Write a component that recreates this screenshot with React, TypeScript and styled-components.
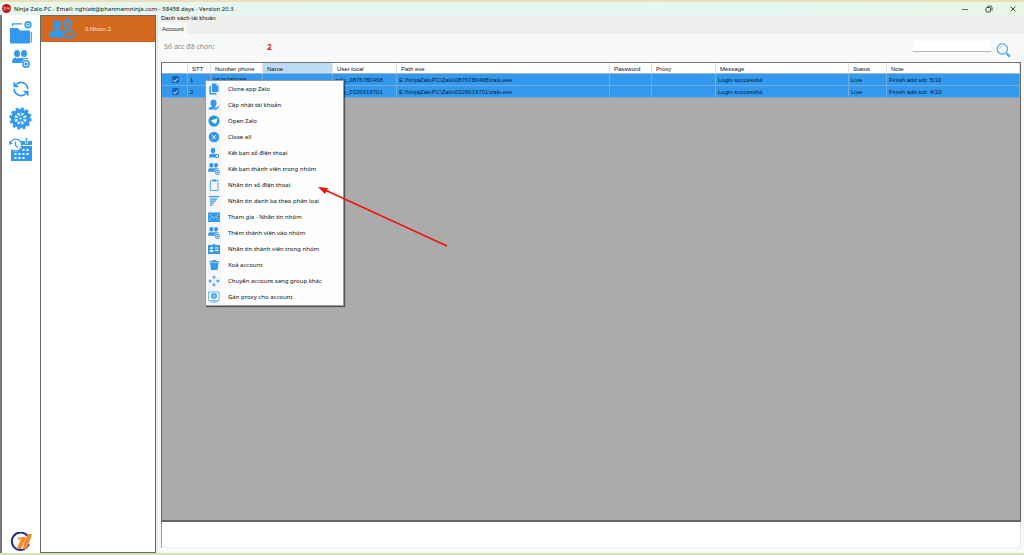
import React from 'react';
import styled, { createGlobalStyle } from 'styled-components';

const BLUE = '#3399ee';
const UI_FONT = '"Noto Sans", "Open Sans", sans-serif';
const GRID_FONT = '"Liberation Sans", Arial, sans-serif';

const GlobalStyle = createGlobalStyle`
  * { box-sizing: border-box; }
  html, body, #root { height: 100%; }
  body { margin: 0; font-family: ${UI_FONT}; font-size: 6px; color: #111; overflow: hidden; }
  button, input { font: inherit; color: inherit; }
  button { border: 0; padding: 0; background: none; display: flex; align-items: center; }
  svg { display: block; flex: none; }
`;

const Window = styled.div`
  position: relative;
  display: flex;
  flex-direction: column;
  height: 100vh;
  background: #f0f0f0;
  border-top: 2px solid #ecdfb8;
  border-bottom: 2px solid #d3e3b4;
`;

const TitleBar = styled.header`
  display: flex;
  align-items: center;
  justify-content: space-between;
  height: 13px;
  flex: none;
  padding: 0 7px 0 2px;
  background: linear-gradient(90deg, #e6f6ee, #e2f9f1 75%, #e9f7e2);
`;

const TitleText = styled.h1`
  display: flex;
  align-items: center;
  gap: 3px;
  margin: 0;
  font-size: 6px;
  font-weight: 400;
  white-space: nowrap;
`;

const WindowButtons = styled.div`
  display: flex;
  gap: 16px;
`;

const Body = styled.div`
  display: flex;
  flex: 1;
  min-height: 0;
  border-left: 2px solid #777;
`;

const Sidebar = styled.nav`
  display: flex;
  flex-direction: column;
  align-items: center;
  width: 38px;
  flex: none;
  padding: 4px 1px 1px 0;
  background: #fff;
`;

const ToolButton = styled.button<{ $height: number }>`
  justify-content: center;
  width: 28px;
  height: ${(p) => p.$height}px;
`;

const BrandLink = styled.a`
  margin-top: auto;
`;

const GroupPanel = styled.aside`
  width: 116px;
  flex: none;
  background: #fff;
  border: 1px solid #6a6a6a;
`;

const GroupButton = styled.button`
  width: 100%;
  height: 26px;
  padding-left: 8px;
  gap: 10px;
  background: #d2691e;
  color: #f7e6d8;
  font-family: ${GRID_FONT};
`;

const Main = styled.main`
  display: flex;
  flex-direction: column;
  flex: 1;
  min-width: 0;
  margin-left: 1px;
  padding: 0 3px 5px 3px;
  border-left: 1px solid #e2e2e2;
  background: #f8f9f9;
`;

const TabStrip = styled.div`
  flex: none;
  margin: 0 -3px;
  padding-left: 3px;
  height: 19px;
  background: #efefef;
  font-family: ${GRID_FONT};
`;

const Caption = styled.h2`
  margin: 0;
  height: 8px;
  line-height: 7px;
  font-size: 6px;
  font-weight: 400;
`;

const Tab = styled.button`
  height: 11px;
  width: 26px;
  padding-left: 1px;
  background: #f8f9f9;
`;

const FilterBar = styled.div`
  display: flex;
  align-items: center;
  flex: none;
  height: 28px;
  padding: 0 10px 4px 3px;
`;

const CountLabel = styled.span`
  width: 103px;
  font-size: 7px;
  color: #888;
`;

const CountValue = styled.strong`
  font-size: 8px;
  color: #f01818;
`;

const SearchInput = styled.input`
  width: 78px;
  height: 11px;
  margin: 0 5px 0 auto;
  padding: 0 2px;
  border: 0;
  border-bottom: 1px solid #b4b4b4;
  background: #fff;
  outline: 0;
`;

const SearchButton = styled.button`
  align-self: flex-end;
`;

const GridArea = styled.section`
  flex: 1;
  min-height: 0;
  background: #ababab;
  border: 1px solid #666;
  border-top-color: #777;
  border-bottom-width: 2px;
`;

const Grid = styled.table`
  width: 100%;
  table-layout: fixed;
  border-collapse: separate;
  border-spacing: 0;
  font-family: ${GRID_FONT};
  font-size: 6px;
  line-height: 8px;
  white-space: nowrap;
`;

const HeadCell = styled.th<{ $active?: boolean }>`
  height: 11px;
  padding: 1px 0 0 4px;
  text-align: left;
  font-weight: 400;
  background: ${(p) => (p.$active ? '#bcdcf4' : '#fff')};
  border-right: 1px solid #e2e2e2;
  border-bottom: 1px solid #9fb4c6;
`;

const Cell = styled.td`
  height: 12px;
  padding: 0 0 0 2px;
  overflow: hidden;
  background: ${BLUE};
  color: #06203c;
  border-right: 1px solid #74a9d8;
  border-bottom: 1px solid #74a9d8;
`;

const RowCheck = styled.input`
  appearance: none;
  display: grid;
  place-content: center;
  width: 7px;
  height: 7px;
  margin: 0 auto;
  border-radius: 2px;
  background: #0f62ae;
  &:checked::after {
    content: '';
    width: 4px;
    height: 2px;
    border: solid #a5cbea;
    border-width: 0 0 1px 1px;
    transform: rotate(-45deg);
  }
`;

const LogPane = styled.section`
  flex: none;
  height: 26px;
  background: #fff;
  border-left: 1px solid #999;
  border-right: 1px solid #e8e8e8;
  border-bottom: 1px solid #eee;
`;

const Menu = styled.div`
  position: absolute;
  left: 205px;
  top: 78px;
  width: 139px;
  background: linear-gradient(90deg, #f3f5f7 15px, #fdfdfd 15px);
  border: 1px solid #999;
  box-shadow: 1px 1px 1px rgba(0, 0, 0, 0.5);
`;

const MenuButton = styled.button`
  width: 100%;
  height: 16px;
  padding-left: 2px;
  gap: 8px;
  white-space: nowrap;
`;

const Pointer = styled.svg`
  position: absolute;
  left: 317px;
  top: 182px;
  pointer-events: none;
`;

const Icon = ({ w = 12, h = w, box = 24, children }: { w?: number; h?: number; box?: number; children: React.ReactNode }) => (
  <svg width={w} height={h} viewBox={`0 0 ${box} ${(box * h) / w}`} fill={BLUE} stroke="none" aria-hidden="true">
    {children}
  </svg>
);

const AppLogo = () => (
  <svg width="9" height="9" viewBox="0 0 18 18" aria-hidden="true">
    <circle cx="9" cy="9" r="9" fill="#c4161c" />
    <path d="M3 7h4l-4 4h4M8.500 11l1.500-4 1.500 4M13 6.500v4.500M15.500 8v3" fill="none" stroke="#f6c9c9" strokeWidth="1.300" />
  </svg>
);

const FolderIcon = () => (
  <Icon w={22} h={23} box={22}>
    <path d="M0 7h8l2 2.500H20V21.500q0 1-1 1H1q-1 0-1-1z" />
    <path d="M2.500 5.500V2.800h9.500M21.200 11v10.500" fill="none" stroke={BLUE} strokeWidth="1.200" />
    <circle cx="18" cy="3.800" r="2.900" fill="#fff" stroke={BLUE} strokeWidth="1.600" />
    <path d="M18 2.300v3M16.500 3.800h3" stroke={BLUE} strokeWidth="1.100" />
  </Icon>
);

const UsersAddIcon = ({ size = 18 }: { size?: number }) => (
  <Icon w={size} box={18}>
    <ellipse cx="5" cy="3.500" rx="3" ry="3.500" />
    <ellipse cx="12" cy="3.500" rx="3" ry="3.500" />
    <path d="M0 13q0-5 3.500-5.500l1.500 1.300 1.500-1.300q1.200.2 2 .9.800-.7 2-.9L12 8.800l1.500-1.300q2.700.4 3.500 2.300-3.500-1.600-6 .4-1 1.100-1.200 2.800z" />
    <circle cx="14" cy="14" r="3.200" fill="#fff" stroke={BLUE} strokeWidth="1.500" />
    <path d="M14 12.200v3.600M12.200 14h3.600" stroke={BLUE} strokeWidth="1.300" />
  </Icon>
);

const RefreshIcon = () => (
  <Icon w={18} box={18}>
    <path d="M4.500 4.200A6.800 6.800 0 0 1 15.800 9.200M13.500 13.800A6.800 6.800 0 0 1 2.200 8.800" fill="none" stroke={BLUE} strokeWidth="1.700" />
    <path d="M1.500 1.500V7.200h5.700zM16.500 16.500V10.800h-5.700z" />
  </Icon>
);

const GearIcon = () => (
  <Icon w={23} box={23}>
    <circle cx="11.500" cy="11.500" r="7.800" fill="none" stroke={BLUE} strokeWidth="3.600" />
    <circle cx="11.500" cy="11.500" r="10" fill="none" stroke={BLUE} strokeWidth="2.200" strokeDasharray="3 2.236" />
    <path d="M11.500 4v15M4 11.500h15M6.500 6.500l10 10M16.500 6.500l-10 10" stroke={BLUE} strokeWidth="1.600" />
    <circle cx="11.500" cy="11.500" r="2.800" />
    <circle cx="11.500" cy="11.500" r="1.100" fill="#fff" />
  </Icon>
);

const ScheduleIcon = () => (
  <Icon w={23} h={24} box={23}>
    <path d="M2 3h21v20H2z" />
    <path d="M13 7.500h10" stroke="#fff" />
    <path d="M17.500 0v5.500" stroke="#fff" strokeWidth="3" />
    <path d="M17.500 0v5" stroke={BLUE} strokeWidth="1.500" />
    <circle cx="6.500" cy="7" r="6.800" fill="#fff" />
    <path d="M1 5a6 6 0 1 1 1.500 6.500M6.500 3.500V7.500l2.500 2M0 3l1 3 3-1" fill="none" stroke={BLUE} strokeWidth="1.200" />
    <path d="M13.500 11h2v2h-2zM17.500 11h2v2h-2zM5.500 15h2v2h-2zM9.500 15h2v2h-2zM13.500 15h2v2h-2zM17.500 15h2v2h-2zM5.500 19h2v2h-2zM9.500 19h2v2h-2zM13.500 19h2v2h-2z" fill="#fff" />
  </Icon>
);

const BrandIcon = () => (
  <svg width="22" height="20" viewBox="0 0 22 20" aria-hidden="true">
    <path d="M17.500 4A8.700 8.700 0 1 0 18.800 12" fill="none" stroke="#17349a" strokeWidth="2" />
    <path d="M7 5.500h4.500l-.5 2H8zM12 5h4L11 17H6.500zM18 2h4L17 17h-4.500l2-6-2 3z" fill="#f58a2a" />
  </svg>
);

const GroupIcon = () => (
  <Icon w={26} h={20} box={26}>
    <ellipse cx="8" cy="5.800" rx="4" ry="4.600" />
    <path d="M0 18q0-6.500 5-7h6q2.500 0 3.500 1.500l-2 2q-1 3.500 3 4H2q-2 0-2-.5z" />
    <circle cx="18.500" cy="4.500" r="3.300" fill="none" stroke={BLUE} strokeWidth="2.400" />
    <path d="M15 11.500h6.500q3.500.5 3.500 5.500-1 1-9 1-3 0-3-2t5-1.500" fill="none" stroke={BLUE} strokeWidth="1.800" />
  </Icon>
);

const SearchIcon = () => (
  <svg width="15" height="15" viewBox="0 0 15 15" fill="none" aria-hidden="true">
    <circle cx="6.300" cy="6" r="5.200" stroke="#49a6ec" strokeWidth="1.200" />
    <path d="M3.500 6A3 3 0 0 1 6.300 3.200" stroke="#8ac6f3" strokeWidth=".8" />
    <path d="M10.500 10.300l3.500 3.500" stroke="#49a6ec" strokeWidth="2.200" />
  </svg>
);

const line = { fill: 'none', stroke: BLUE };

const menuItems: { label: string; icon: React.ReactNode }[] = [
  {
    label: 'Clone app Zalo',
    icon: <Icon><path d="M8 1h9l4 4v13H8z" /><path d="M3 6h3v14h11v3H3z" /><path d="M17 1v4h4" fill="none" stroke="#fff" /></Icon>,
  },
  {
    label: 'Cập nhật tài khoản',
    icon: <Icon><ellipse cx="11" cy="8" rx="6" ry="7" /><path d="M1 21q0-5 7-5.500v-3h6v3l3 .5-5 5z" /><path d="M14 22l8-7" stroke={BLUE} strokeWidth="2.500" /></Icon>,
  },
  {
    label: 'Open Zalo',
    icon: <Icon><circle cx="12" cy="12" r="11" fill="#1a96dc" /><path d="M4 12l15-6-3 12-4-3-2 2-1-4z" fill="#fff" /></Icon>,
  },
  {
    label: 'Close all',
    icon: <Icon><circle cx="12" cy="12" r="10.500" /><path d="M8 8l8 8M16 8l-8 8" stroke="#fff" strokeWidth="1.800" /></Icon>,
  },
  {
    label: 'Kết bạn số điện thoại',
    icon: <Icon><ellipse cx="10" cy="7" rx="4.500" ry="5.500" /><path d="M2 21q0-7 5-7.500h6q2 0 3 1.500l-3 6z" /><circle cx="18" cy="18" r="3.500" {...line} strokeWidth="2.400" /></Icon>,
  },
  { label: 'Kết bạn thành viên trong nhóm', icon: <UsersAddIcon size={12} /> },
  {
    label: 'Nhắn tin số điện thoại',
    icon: <Icon><path d="M5 3h15v20H5z" {...line} strokeWidth="1.600" /><path d="M9 1h7v4H9z" /></Icon>,
  },
  {
    label: 'Nhắn tin danh bạ theo phân loại',
    icon: <Icon><path d="M2 3h20M4 8h14M4 12h12M4 16h8M4 20h5" {...line} strokeWidth="2.500" /></Icon>,
  },
  {
    label: 'Tham gia - Nhắn tin nhóm',
    icon: <Icon><path d="M0 3h24v19H0z" /><path d="M1 6l11 8 11-8M1 19l7-7M23 19l-7-7" fill="none" stroke="#cfe6fa" strokeWidth="1.200" /></Icon>,
  },
  { label: 'Thêm thành viên vào nhóm', icon: <UsersAddIcon size={12} /> },
  {
    label: 'Nhắn tin thành viên trong nhóm',
    icon: <Icon><path d="M0 4h9l2-2h3l1 2h9v18H0z" /><circle cx="7" cy="10" r="2.500" fill="#fff" /><path d="M3 18q0-5 4-5t4 5zM14 9h7v2h-7zM14 14h7v2h-7z" fill="#fff" /></Icon>,
  },
  {
    label: 'Xoá account',
    icon: <Icon><path d="M4 7h17l-2 15H6zM3 4h6l1-2h5l1 2h6v2H3z" /></Icon>,
  },
  {
    label: 'Chuyển account sang group khác',
    icon: <Icon><path d="M12 1l4 4H8zM12 23l4-4H8zM1 12l4-4v8zM23 12l-4-4v8z" /><path d="M12 4v4M12 16v4M4 12h4M16 12h4" {...line} strokeWidth="2" /></Icon>,
  },
  {
    label: 'Gán proxy cho account',
    icon: <Icon><path d="M1 2h21v17H1zM12 19v4M4 22h16" {...line} strokeWidth="1.300" /><circle cx="12" cy="10" r="6" /><path d="M6 10h12M12 4q-5 6 0 12M12 4q5 6 0 12" fill="none" stroke="#b9dcf8" /></Icon>,
  },
];

const columns = [
  { label: '', width: 26 },
  { label: 'STT', width: 23 },
  { label: 'Number phone', width: 52 },
  { label: 'Name', width: 70 },
  { label: 'User local', width: 64 },
  { label: 'Path exe', width: 213 },
  { label: 'Password', width: 42 },
  { label: 'Proxy', width: 64 },
  { label: 'Message', width: 133 },
  { label: 'Status', width: 38 },
  { label: 'Note', width: undefined },
];

const accounts = [
  { phone: '0876780468', note: 'Finish add sdt: 5/10' },
  { phone: '0326619701', note: 'Finish add sdt: 4/10' },
];

const tools = [
  { label: 'Add group', height: 26, icon: <FolderIcon /> },
  { label: 'Add accounts', height: 28, icon: <UsersAddIcon /> },
  { label: 'Refresh', height: 32, icon: <RefreshIcon /> },
  { label: 'Settings', height: 26, icon: <GearIcon /> },
  { label: 'Schedule', height: 38, icon: <ScheduleIcon /> },
];

export default function App() {
  return (
    <Window>
      <GlobalStyle />
      <TitleBar>
        <TitleText>
          <AppLogo />
          Ninja Zalo PC - Email: nghiatt@phanmemninja.com - 58458 days - Version 20.3
        </TitleText>
        <WindowButtons>
          <button aria-label="Minimize">
            <svg width="8" height="8" viewBox="0 0 8 8"><path d="M1 4.500h6" stroke="#666" /></svg>
          </button>
          <button aria-label="Restore">
            <svg width="8" height="8" viewBox="0 0 8 8" fill="none" stroke="#333" strokeWidth=".9"><rect x="1" y="2.500" width="4.500" height="4.500" rx="1" /><path d="M2.500 1.200h3q1.500 0 1.500 1.500v3" /></svg>
          </button>
          <button aria-label="Close">
            <svg width="8" height="8" viewBox="0 0 8 8"><path d="M1.500 1.500l5 5M6.500 1.500l-5 5" stroke="#333" strokeWidth=".9" /></svg>
          </button>
        </WindowButtons>
      </TitleBar>
      <Body>
        <Sidebar>
          {tools.map((tool) => (
            <ToolButton key={tool.label} aria-label={tool.label} $height={tool.height}>
              {tool.icon}
            </ToolButton>
          ))}
          <BrandLink href="#" aria-label="Ninja home">
            <BrandIcon />
          </BrandLink>
        </Sidebar>
        <GroupPanel>
          <GroupButton>
            <GroupIcon />
            0.Nhóm 2
          </GroupButton>
        </GroupPanel>
        <Main>
          <TabStrip>
            <Caption>Danh sách tài khoản</Caption>
            <Tab>Account</Tab>
          </TabStrip>
          <FilterBar>
            <CountLabel>Số acc đã chọn:</CountLabel>
            <CountValue>2</CountValue>
            <SearchInput type="text" aria-label="Search accounts" />
            <SearchButton aria-label="Search">
              <SearchIcon />
            </SearchButton>
          </FilterBar>
          <GridArea>
            <Grid>
              <colgroup>
                {columns.map((column) => (
                  <col key={column.label} width={column.width} />
                ))}
              </colgroup>
              <thead>
                <tr>
                  {columns.map((column) => (
                    <HeadCell key={column.label} $active={column.label === 'Name'}>
                      {column.label}
                    </HeadCell>
                  ))}
                </tr>
              </thead>
              <tbody>
                {accounts.map((account, index) => (
                  <tr key={account.phone}>
                    <Cell>
                      <RowCheck type="checkbox" defaultChecked aria-label={`Select ${account.phone}`} />
                    </Cell>
                    <Cell>{index + 1}</Cell>
                    <Cell>{account.phone}</Cell>
                    <Cell />
                    <Cell>zalo_{account.phone}</Cell>
                    <Cell>{`E:\\NinjaZaloPC\\Zalo\\${account.phone}\\zalo.exe`}</Cell>
                    <Cell />
                    <Cell />
                    <Cell>Login successful</Cell>
                    <Cell>Live</Cell>
                    <Cell>{account.note}</Cell>
                  </tr>
                ))}
              </tbody>
            </Grid>
          </GridArea>
          <LogPane aria-label="Log" />
        </Main>
      </Body>
      <Menu role="menu">
        {menuItems.map((item) => (
          <MenuButton key={item.label} role="menuitem">
            {item.icon}
            {item.label}
          </MenuButton>
        ))}
      </Menu>
      <Pointer width="134" height="66" viewBox="0 0 134 66" aria-hidden="true">
        <path d="M8 6L130 62" stroke="#f5120c" strokeWidth="1.600" />
        <path d="M1 3l10 1-3 6z" fill="#f5120c" />
      </Pointer>
    </Window>
  );
}
